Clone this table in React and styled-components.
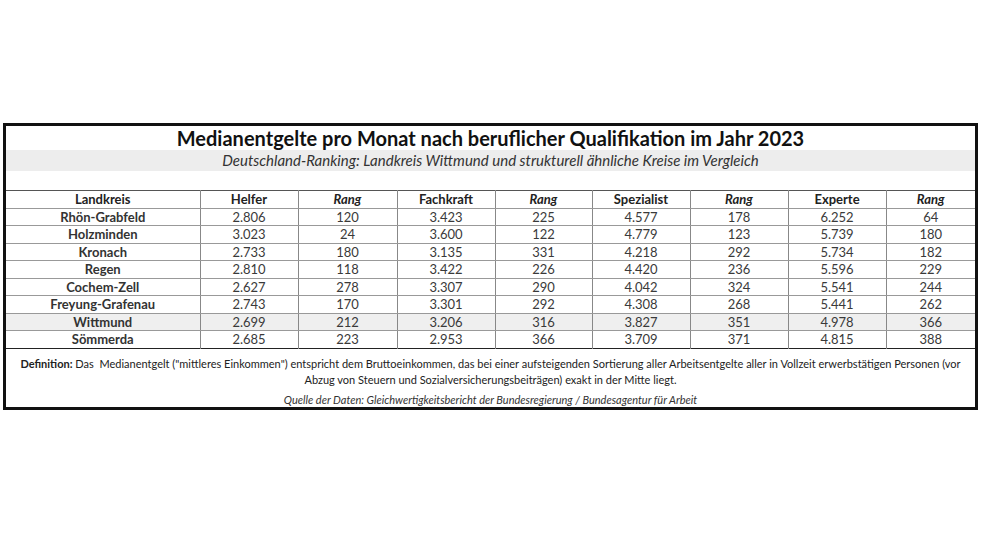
import React from 'react'
import styled, { createGlobalStyle } from 'styled-components'

const GlobalStyle = createGlobalStyle`
    body{
        margin: 0;
        background: #ffffff;
        font-family: Lato, "Liberation Sans", sans-serif;
    }
`

const Page = styled.div`
    width: 983px;
    height: 553px;
    padding-top: 123px;
    padding-left: 3px;
    box-sizing: border-box;
`

const Frame = styled.div`
    width: 975px;
    border: 3px solid #111;
    box-sizing: border-box;
    display: flex;
    flex-direction: column;
`

const Title = styled.div`
    height: 24px;
    line-height: 24px;
    text-align: center;
    font-size: 20px;
    font-weight: 700;
    color: #111;
`

const SubTitle = styled.div`
    height: 21px;
    line-height: 21px;
    background: #ededed;
    text-align: center;
    font-size: 15px;
    font-style: italic;
    color: #333;
`

const Spacer = styled.div`
    height: 19px;
`

const Table = styled.table`
    width: 100%;
    table-layout: fixed;
    border-collapse: collapse;
    border-top: 1px solid #555;
    border-bottom: 1px solid #222;
    font-size: 13px;
    th, td{
        height: 16.5px;
        padding: 0;
        text-align: center;
        border-left: 1px solid #888;
        border-bottom: 1px solid #999;
        line-height: 16px;
    }
    th:first-child, td:first-child{
        border-left: none;
    }
    tr:last-child td{
        border-bottom: none;
    }
`

const HeadCell = styled.th`
    font-weight: 700;
    color: #222;
    font-style: ${props => props.italic ? 'italic' : 'normal'};
`

const Row = styled.tr`
    background: ${props => props.mark ? '#efefef' : 'transparent'};
`

const NameCell = styled.td`
    font-weight: 700;
    color: #333;
`

const NumCell = styled.td`
    color: #3a3a3a;
`

const Footer = styled.div`
    padding: 7px 6px 1px;
    text-align: center;
    color: #222;
`

const Definition = styled.p`
    margin: 0;
    font-size: 11px;
    line-height: 16px;
    white-space: nowrap;
    b{
        font-weight: 700;
    }
`

const Source = styled.p`
    margin: 5px 0 0;
    font-size: 11px;
    font-style: italic;
    color: #333;
    line-height: 13px;
`

const widths = [194, 98, 99, 98, 97, 98, 98, 98, 89]
const heads = [
    ['Landkreis', false], ['Helfer', false], ['Rang', true], ['Fachkraft', false], ['Rang', true],
    ['Spezialist', false], ['Rang', true], ['Experte', false], ['Rang', true]
]

const rows = [
    ['Rhön-Grabfeld', '2.806', '120', '3.423', '225', '4.577', '178', '6.252', '64'],
    ['Holzminden', '3.023', '24', '3.600', '122', '4.779', '123', '5.739', '180'],
    ['Kronach', '2.733', '180', '3.135', '331', '4.218', '292', '5.734', '182'],
    ['Regen', '2.810', '118', '3.422', '226', '4.420', '236', '5.596', '229'],
    ['Cochem-Zell', '2.627', '278', '3.307', '290', '4.042', '324', '5.541', '244'],
    ['Freyung-Grafenau', '2.743', '170', '3.301', '292', '4.308', '268', '5.441', '262'],
    ['Wittmund', '2.699', '212', '3.206', '316', '3.827', '351', '4.978', '366'],
    ['Sömmerda', '2.685', '223', '2.953', '366', '3.709', '371', '4.815', '388'],
]

const App = () => {
    return(
        <Page>
            <GlobalStyle />
            <Frame>
                <Title>Medianentgelte pro Monat nach beruflicher Qualifikation im Jahr 2023</Title>
                <SubTitle>Deutschland-Ranking: Landkreis Wittmund und strukturell ähnliche Kreise im Vergleich</SubTitle>
                <Spacer />
                <Table>
                    <colgroup>
                        {widths.map((w, i) => <col key={i} style={{width: w}} />)}
                    </colgroup>
                    <thead>
                        <tr>
                            {heads.map(([label, it], i) => <HeadCell key={i} italic={it}>{label}</HeadCell>)}
                        </tr>
                    </thead>
                    <tbody>
                        {rows.map((r) => (
                            <Row key={r[0]} mark={r[0] === 'Wittmund'}>
                                <NameCell>{r[0]}</NameCell>
                                {r.slice(1).map((v, i) => <NumCell key={i}>{v}</NumCell>)}
                            </Row>
                        ))}
                    </tbody>
                </Table>
                <Footer>
                    <Definition>
                        <b>Definition:</b> Das&nbsp; Medianentgelt ("mittleres Einkommen") entspricht dem Bruttoeinkommen, das bei einer aufsteigenden Sortierung aller Arbeitsentgelte aller in Vollzeit erwerbstätigen Personen (vor
                        <br />
                        Abzug von Steuern und Sozialversicherungsbeiträgen) exakt in der Mitte liegt.
                    </Definition>
                    <Source>Quelle der Daten: Gleichwertigkeitsbericht der Bundesregierung / Bundesagentur für Arbeit</Source>
                </Footer>
            </Frame>
        </Page>
    )
}

export default App
